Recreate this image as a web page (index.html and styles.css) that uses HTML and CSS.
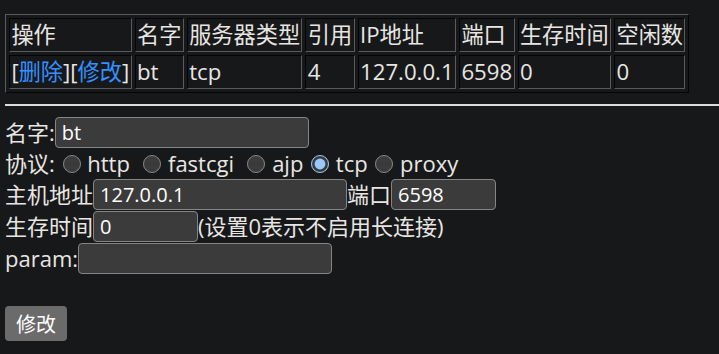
FILE: index.html
```html
<!DOCTYPE html>
<html lang="zh-CN">
<head>
    <meta charset="UTF-8">
    <title>服务器</title>
    <link rel="stylesheet" href="styles.css">
</head>
<body>
    <table class="server-list">
        <tr>
            <td>操作</td>
            <td>名字</td>
            <td>服务器类型</td>
            <td>引用</td>
            <td>IP地址</td>
            <td>端口</td>
            <td>生存时间</td>
            <td>空闲数</td>
        </tr>
        <tr>
            <td>[<a href="#">删除</a>][<a href="#">修改</a>]</td>
            <td>bt</td>
            <td>tcp</td>
            <td>4</td>
            <td>127.0.0.1</td>
            <td>6598</td>
            <td>0</td>
            <td>0</td>
        </tr>
    </table>

    <hr>

    <form class="server-form" onsubmit="return false">
        <div class="row">名字:<input type="text" class="wide" value="bt"></div>
        <div class="row proto">协议: <input type="radio" name="proto"> http  <input type="radio" name="proto"> fastcgi  <input type="radio" name="proto"> ajp <input type="radio" name="proto" checked> tcp <input type="radio" name="proto"> proxy</div>
        <div class="row">主机地址<input type="text" class="wide" value="127.0.0.1">端口<input type="text" class="short" value="6598"></div>
        <div class="row">生存时间<input type="text" class="short" value="0">(设置0表示不启用长连接)</div>
        <div class="row">param:<input type="text" class="wide" value=""></div>
        <div class="submit">
            <button type="submit">修改</button>
        </div>
    </form>
</body>
</html>
```

FILE: styles.css
```css
:root {
    color-scheme: dark;
}

body {
    margin: 5px 0 5px 5px;
    background-color: #17181a;
    color: #e8e6e3;
    font-family: "Open Sans", "Noto Sans CJK SC", sans-serif;
    font-size: 22.2px;
    line-height: 29px;
}

a {
    color: #3391ff;
    text-decoration: none;
}

.server-list {
    margin-top: 9px;
    border: 1px outset #5a5a5a;
    border-spacing: 3px;
}

.server-list td {
    border: 1px inset #5a5a5a;
    padding: 1.4px;
    white-space: nowrap;
}

hr {
    margin: 11px 0;
    height: 2px;
    border: none;
    background-color: #dcdcdc;
}

.server-form {
    font-size: 22px;
}

.row {
    display: flex;
    align-items: center;
    height: 32px;
    white-space: pre;
}

.row.proto {
    height: 30px;
}

input[type="text"] {
    box-sizing: border-box;
    height: 31px;
    margin: 0;
    padding: 1px 6px;
    background-color: #3b3b3b;
    color: #fff;
    border: 1px solid #858585;
    border-radius: 4px;
    font-family: "Open Sans", sans-serif;
    font-size: 20px;
}

input.wide {
    width: 254px;
}

input.short {
    width: 105px;
}

input[type="radio"] {
    width: 18px;
    height: 18px;
    margin: 1px 1px 0 2px;
}

.submit {
    margin-top: 31px;
}

button {
    height: 35px;
    padding: 0 11px;
    background-color: #6b6b6b;
    color: #fff;
    border: none;
    border-radius: 4px;
    font-family: "Noto Sans CJK SC", sans-serif;
    font-size: 20px;
}
```
